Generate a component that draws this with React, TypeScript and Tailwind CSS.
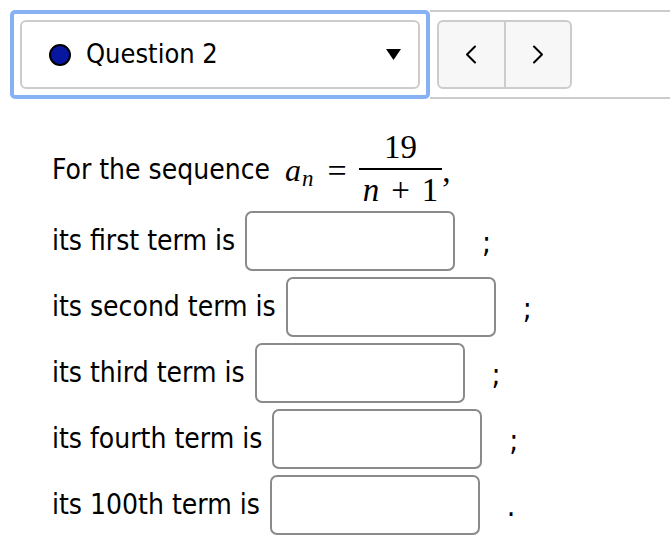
const rows = [
  { label: 'its first term is', end: ';' },
  { label: 'its second term is', end: ';' },
  { label: 'its third term is', end: ';' },
  { label: 'its fourth term is', end: ';' },
  { label: 'its 100th term is', end: '.' },
]

function Chevron({ dir }: { dir: 'left' | 'right' }) {
  return (
    <svg width="12" height="19" viewBox="0 0 12 19" fill="none" stroke="black" strokeWidth="2" strokeLinecap="round" strokeLinejoin="round">
      {dir === 'left' ? <polyline points="10,1.5 2,9.5 10,17.5" /> : <polyline points="2,1.5 10,9.5 2,17.5" />}
    </svg>
  )
}

export default function App() {
  return (
    <div className="w-[670px] h-[550px] bg-white text-black overflow-hidden font-['DejaVu_Sans',sans-serif] font-stretch-condensed">
      {/* Toolbar */}
      <div className="flex pt-[10px] pl-[10px]">
        <div className="w-[420px] h-[89px] border-4 border-[#86b1f2] rounded-[5px] p-[6px]">
          <div className="h-full border-2 border-[#cccccc] rounded-[6px] flex items-center pl-[27px] pr-[17px]">
            <span className="w-[22px] h-[22px] rounded-full bg-[#0717a0] border-2 border-black shrink-0" />
            <span className="ml-[15px] text-[27px]">Question 2</span>
            <span className="flex-1" />
            <svg width="15" height="11" viewBox="0 0 15 11">
              <polygon points="0,0 15,0 7.5,11" fill="black" />
            </svg>
          </div>
        </div>
        <div className="flex-1 h-[89px] border-y-2 border-[#cccccc] flex items-center pl-[7px]">
          <div className="w-[135px] h-[69px] flex border-2 border-[#cccccc] rounded-[6px] bg-[#f7f7f7]">
            <button className="flex-1 flex items-center justify-center">
              <Chevron dir="left" />
            </button>
            <div className="w-[2px] bg-[#cccccc]" />
            <button className="flex-1 flex items-center justify-center">
              <Chevron dir="right" />
            </button>
          </div>
        </div>
      </div>

      {/* Question body */}
      <div className="pl-[52px] pt-[30px] text-[28px]">
        <p className="h-[82px] flex items-center">
          <span>For the sequence</span>
          <span className="ml-[15px] font-['Liberation_Serif',serif] italic text-[32px]">
            a<sub className="text-[23px] relative top-[5px] ml-[1px]">n</sub>
          </span>
          <span className="ml-[14px] font-['Liberation_Serif',serif] text-[34px]">=</span>
          <span className="ml-[12px] inline-flex flex-col items-center font-['Liberation_Serif',serif] text-[33px] leading-[1.05] relative top-[-1px]">
            <span className="px-[4px]">19</span>
            <span className="w-full h-[2px] bg-black my-[3px]" />
            <span className="px-[4px]">
              <i>n</i>
              <span className="mx-[12px]">+</span>1
            </span>
          </span>
          <span className="font-['Liberation_Serif',serif] text-[33px] relative top-[2px]">,</span>
        </p>

        <div className="flex flex-col gap-[6px]">
          {rows.map((r) => (
            <div key={r.label} className="flex items-center h-[60px]">
              <span>{r.label}</span>
              <input
                type="text"
                className="ml-[10px] w-[210px] h-[60px] border-2 border-[#8a8a8a] rounded-[7px] bg-white outline-none"
              />
              <span className="ml-[27px] text-[30px]">{r.end}</span>
            </div>
          ))}
        </div>
      </div>
    </div>
  )
}
